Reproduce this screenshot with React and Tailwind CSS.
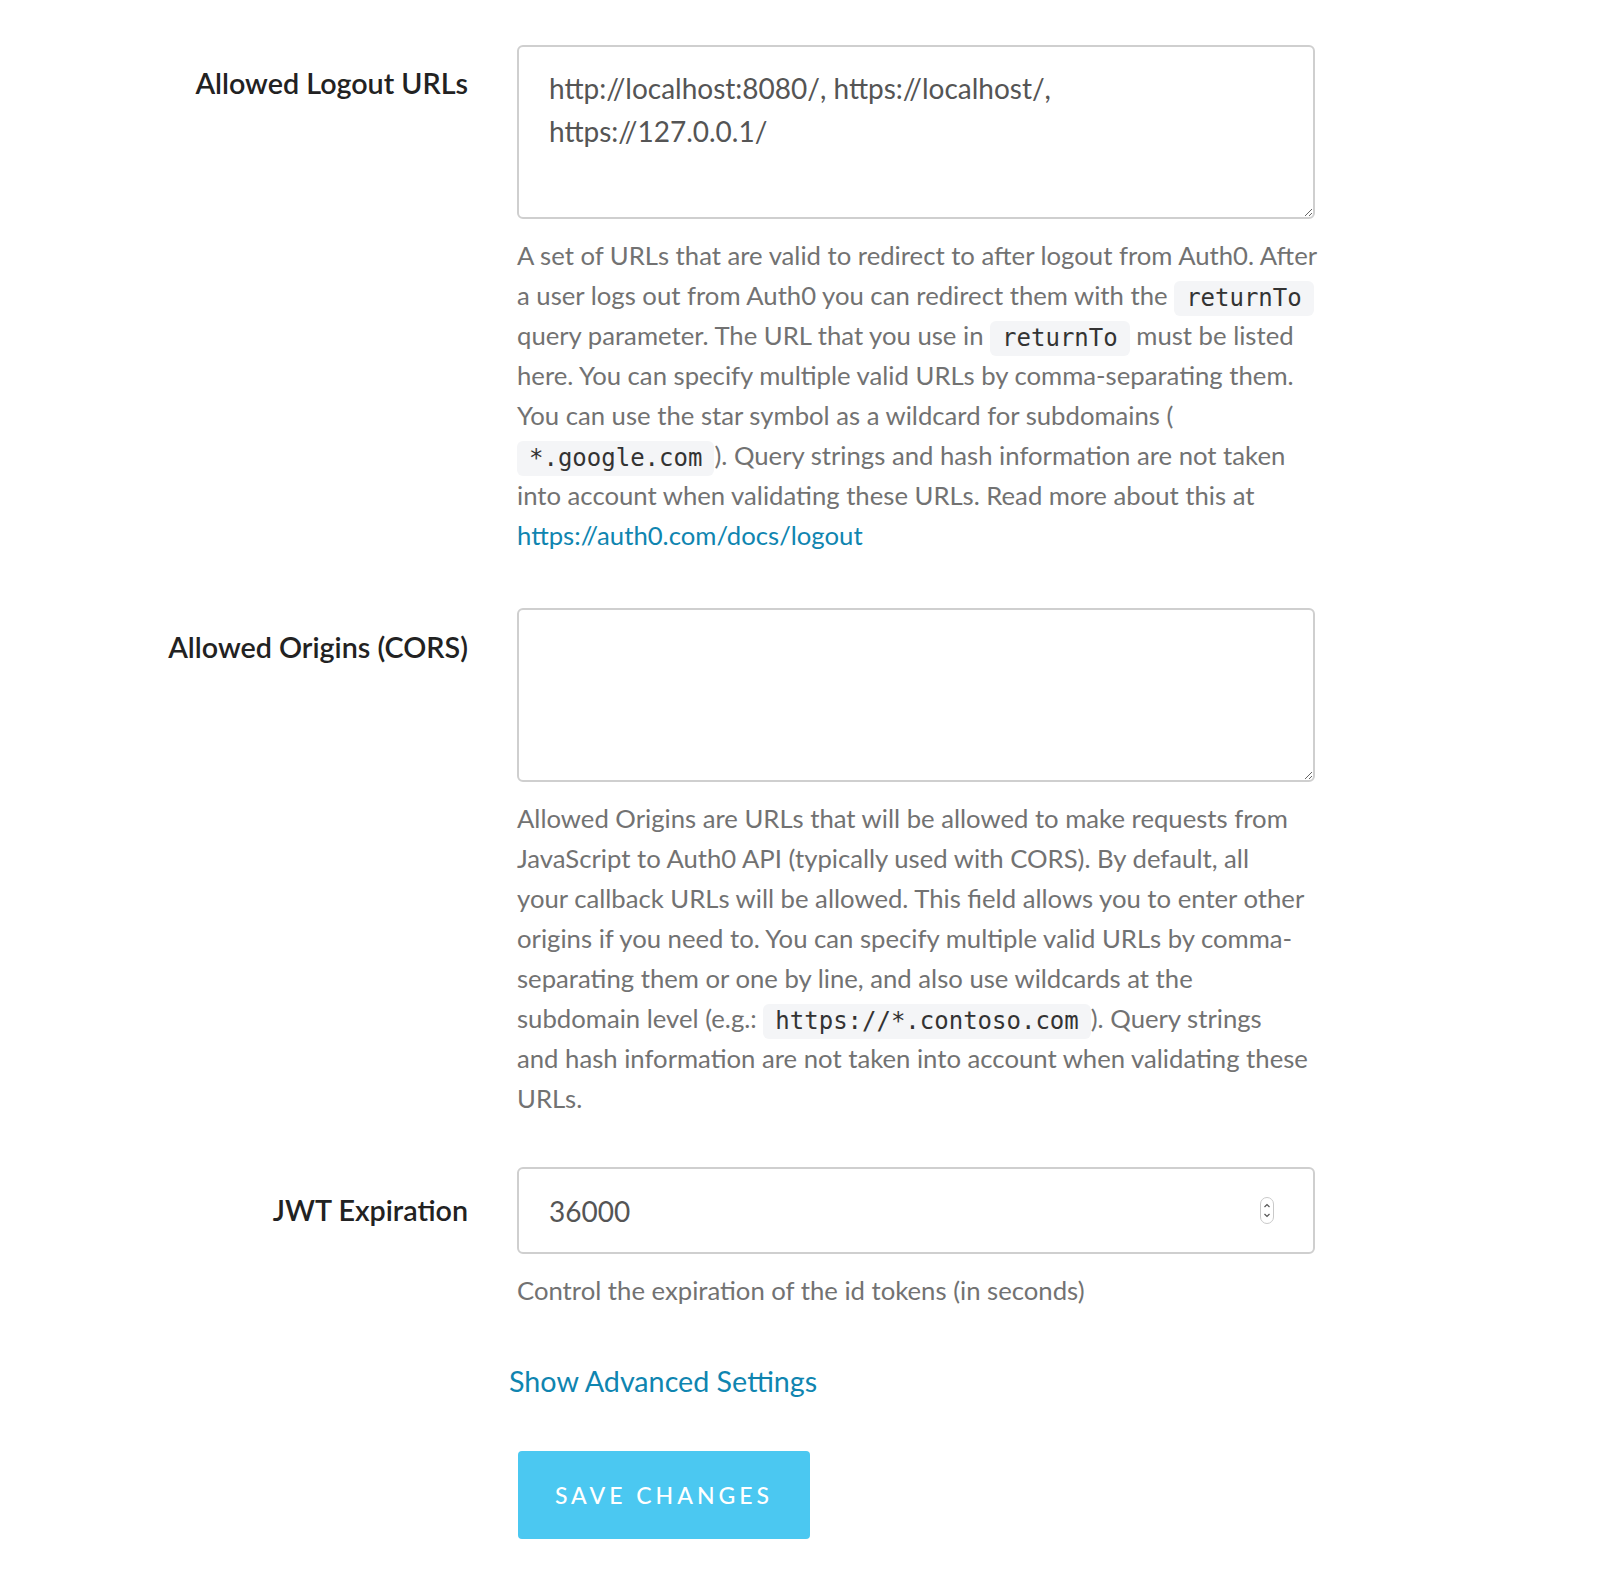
import { useState } from 'react';

const sans = { fontFamily: 'Lato, "Liberation Sans", sans-serif' };

function Code({ children }) {
  return (
    <span
      className="inline-block h-[35px] px-[12px] rounded-[6px] bg-[#f4f5f7] text-[#333] text-[24px] leading-[35px] align-middle"
      style={{ fontFamily: '"DejaVu Sans Mono", "Liberation Mono", monospace' }}
    >
      {children}
    </span>
  );
}

function Row({ label, labelPad, children, className = '' }) {
  return (
    <div className={`grid grid-cols-[468px_798px] gap-x-[49px] ${className}`}>
      <div className={`text-right text-[28.7px] leading-[40px] font-semibold text-[#222] ${labelPad}`}>{label}</div>
      <div>{children}</div>
    </div>
  );
}

function Help({ lines }) {
  return (
    <div className="mt-[16px] text-[25.7px] leading-[40px] text-[#727272] whitespace-nowrap">
      {lines.map((l, i) => (
        <div key={i} className="h-[40px]">{l}</div>
      ))}
    </div>
  );
}

export default function App() {
  const [logout, setLogout] = useState('http://localhost:8080/, https://localhost/,\nhttps://127.0.0.1/');
  const [origins, setOrigins] = useState('');
  const [jwt, setJwt] = useState('36000');

  const textareaCls =
    'block w-full h-[174px] border-2 border-[#cfcfcf] rounded-[6px] pt-[20px] px-[30px] text-[28px] leading-[43px] text-[#555] outline-none';

  return (
    <div className="min-h-screen bg-white pt-[45px] pb-[44px]" style={sans}>
      <Row label="Allowed Logout URLs" labelPad="pt-[18px]">
        <textarea className={textareaCls} style={sans} value={logout} onChange={(e) => setLogout(e.target.value)} />
        <Help
          lines={[
            'A set of URLs that are valid to redirect to after logout from Auth0. After',
            <>a user logs out from Auth0 you can redirect them with the <Code>returnTo</Code></>,
            <>query parameter. The URL that you use in <Code>returnTo</Code> must be listed</>,
            'here. You can specify multiple valid URLs by comma-separating them.',
            'You can use the star symbol as a wildcard for subdomains (',
            <><Code>*.google.com</Code>). Query strings and hash information are not taken</>,
            'into account when validating these URLs. Read more about this at',
            <a href="#" className="text-[#0f85b0]">https://auth0.com/docs/logout</a>,
          ]}
        />
      </Row>

      <Row label="Allowed Origins (CORS)" labelPad="pt-[19px]" className="mt-[53px]">
        <textarea className={textareaCls} style={sans} value={origins} onChange={(e) => setOrigins(e.target.value)} />
        <Help
          lines={[
            'Allowed Origins are URLs that will be allowed to make requests from',
            'JavaScript to Auth0 API (typically used with CORS). By default, all',
            'your callback URLs will be allowed. This field allows you to enter other',
            'origins if you need to. You can specify multiple valid URLs by comma-',
            'separating them or one by line, and also use wildcards at the',
            <>subdomain level (e.g.: <Code>https://*.contoso.com</Code>). Query strings</>,
            'and hash information are not taken into account when validating these',
            'URLs.',
          ]}
        />
      </Row>

      <Row label="JWT Expiration" labelPad="pt-[23px]" className="mt-[49px]">
        <div className="relative">
          <input
            type="text"
            className="block w-full h-[87px] border-2 border-[#cfcfcf] rounded-[6px] px-[30px] text-[28px] text-[#555] outline-none"
            style={sans}
            value={jwt}
            onChange={(e) => setJwt(e.target.value)}
          />
          <svg className="absolute right-[41px] top-[30px]" width="14" height="27" viewBox="0 0 14 27">
            <rect x="0.5" y="0.5" width="13" height="26" rx="6.5" fill="#fff" stroke="#c9c9c9" />
            <path d="M4.5 10 L7 7.5 L9.5 10" fill="none" stroke="#555" strokeWidth="1.2" />
            <path d="M4.5 17 L7 19.5 L9.5 17" fill="none" stroke="#555" strokeWidth="1.2" />
          </svg>
        </div>
        <Help lines={['Control the expiration of the id tokens (in seconds)']} />
      </Row>

      <Row label="" labelPad="" className="mt-[51px]">
        <a href="#" className="block -ml-[8px] text-[28.7px] leading-[40px] text-[#0f85b0]">Show Advanced Settings</a>
        <button className="mt-[50px] ml-[1px] w-[292px] h-[88px] rounded-[4px] bg-[#4bc8f1] text-white text-[23px] font-medium tracking-[4px]">
          SAVE CHANGES
        </button>
      </Row>
    </div>
  );
}
